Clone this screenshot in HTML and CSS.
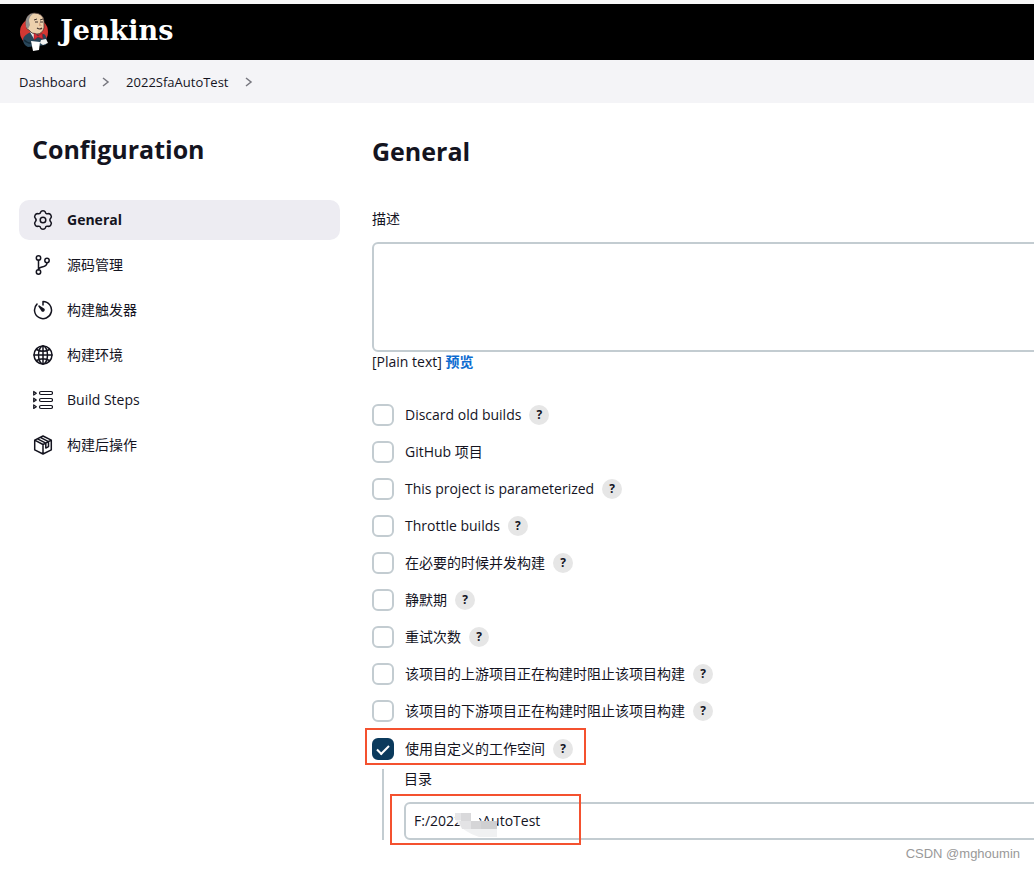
FILE: index.html
```html
<!DOCTYPE html>
<html lang="zh-CN">
<head>
<meta charset="utf-8">
<title>2022SfaAutoTest Config [Jenkins]</title>
<link rel="stylesheet" href="styles.css">
</head>
<body>
<header class="header">
  <a class="brand" href="#">
    <svg class="brand-logo" viewBox="0 0 28 40" aria-hidden="true">
      <circle cx="14" cy="20" r="14" fill="#d33833"/>
      <path d="M3 27Q4 23 11 20L19 23 24 22Q28 25 26 33L8 35Q3 33 3 27Z" fill="#29465a"/>
      <path d="M10 20l4 7 3-4Z" fill="#f1f1ef"/>
      <path d="M6 12Q5 2 14 1 23 1 24 9L24 16Q22 22 17 22 11 22 9 18L7 17Z" fill="#ecd0ac" stroke="#4b3b38" stroke-width=".8"/>
      <path d="M6 15Q4 3 14 1 9 4 9 9L10 13 8 17Z" fill="#92908d"/>
      <path d="M14 8l3-1M20 8l3-1" stroke="#40332f" stroke-width="1"/>
      <path d="M15 10h3M20 10h3M17 16q3 2 5 0" stroke="#40332f" stroke-width="1.200" fill="none"/>
      <path d="M19 10l3 4h-3" fill="#d7a987"/>
      <path d="M14 21l4 3 4-3 1 6-5-2-4 3Z" fill="#d52c36" stroke="#8d1920" stroke-width=".5"/>
      <path d="M4 28Q8 32 13 31" fill="none" stroke="#142b39" stroke-width="1.500"/>
      <path d="M11 29L20 30 19 38 13 39Z" fill="#fff"/>
      <path d="M21 28l5-1 2 4-5 2-3-2Z" fill="#f1f1ef"/>
    </svg>
    <span class="brand-name">Jenkins</span>
  </a>
</header>
<nav class="breadcrumbs" aria-label="Breadcrumb">
  <a href="#">Dashboard</a>
  <svg class="chevron" viewBox="0 0 8 12"><path d="M1 2l5 4-5 4"/></svg>
  <a href="#">2022SfaAutoTest</a>
  <svg class="chevron" viewBox="0 0 8 12"><path d="M1 2l5 4-5 4"/></svg>
</nav>
<div class="page">
  <aside class="sidebar">
    <h1 class="sidebar-title">Configuration</h1>
    <nav class="tasks">
      <a class="task task-active" href="#">
        <svg class="icon" viewBox="0 0 20 20"><path d="M7.7 2.1Q8.2.8 10 .8t2.3 1.3c.4 1.5 1.3 2 2.8 1.6 1.2-.3 2 .1 2.8 1.500.8 1.400.7 2.200-.2 3.100-1.100 1.100-1.100 2.300 0 3.400.9.9 1 1.700.2 3.100-.8 1.400-1.600 1.800-2.800 1.500-1.500-.4-2.400.1-2.800 1.600Q11.800 19.200 10 19.200t-2.300-1.300c-.4-1.500-1.300-2-2.800-1.600-1.200.3-2-.1-2.800-1.500-.8-1.400-.7-2.200.2-3.100 1.100-1.100 1.100-2.300 0-3.400-.9-.9-1-1.700-.2-3.100.8-1.400 1.600-1.800 2.800-1.500 1.500.4 2.400-.1 2.800-1.600Z"/><circle cx="10" cy="10" r="2.800"/></svg>
        <span>General</span>
      </a>
      <a class="task" href="#">
        <svg class="icon" viewBox="0 0 20 20"><circle cx="5.500" cy="3" r="2.200"/><circle cx="5.500" cy="17" r="2.200"/><circle cx="14" cy="5.500" r="2.200"/><path d="M5.500 5.200v9.600M14 7.700c0 4-4 4-6.500 4.800-1.300.4-2 1-2 2.300"/></svg>
        <span>源码管理</span>
      </a>
      <a class="task" href="#">
        <svg class="icon" viewBox="0 0 20 20"><path d="M10 5V1.600A8.500 8.500 0 1 1 4 4.100"/><path d="M6 6l5 3.400a1.300 1.300 0 0 1-1.600 1.600Z" fill="currentColor"/></svg>
        <span>构建触发器</span>
      </a>
      <a class="task" href="#">
        <svg class="icon" viewBox="0 0 20 20"><circle cx="10" cy="10" r="9"/><ellipse cx="10" cy="10" rx="4.500" ry="9"/><path d="M10 1v18M1 10h18M3.500 4.500Q10 8 16.500 4.500M3.500 15.500Q10 12 16.500 15.500"/></svg>
        <span>构建环境</span>
      </a>
      <a class="task" href="#">
        <svg class="icon icon-thin" viewBox="0 0 20 20"><rect x="6.500" y="1.500" width="13" height="3" rx="1.500"/><rect x="6.500" y="8.500" width="13" height="3" rx="1.500"/><rect x="6.500" y="15.500" width="13" height="3" rx="1.500"/><path d="M.7 1.500v3.600l2.600-1.800ZM.7 8.200v3.600L3.300 10ZM.7 14.900v3.600l2.600-1.800Z"/></svg>
        <span>Build Steps</span>
      </a>
      <a class="task" href="#">
        <svg class="icon" viewBox="0 0 20 20"><path d="M10 1l8.300 4.200v9.600L10 19l-8.300-4.200V5.200ZM1.700 5.200L10 9.500l8.300-4.300M10 9.500V19M4.500 3.800l8.300 4.300v5l2.700-1.500V6.600L7.300 2.400"/></svg>
        <span>构建后操作</span>
      </a>
    </nav>
  </aside>
  <main class="main">
    <h2 class="section-title">General</h2>
    <label class="field-label" for="description">描述</label>
    <textarea class="textarea" id="description"></textarea>
    <div class="preview">[Plain text] <a href="#">预览</a></div>
    <div class="options">
      <div class="option"><input type="checkbox" id="o1"><label for="o1">Discard old builds</label><button class="help" type="button">?</button></div>
      <div class="option"><input type="checkbox" id="o2"><label for="o2">GitHub 项目</label></div>
      <div class="option"><input type="checkbox" id="o3"><label for="o3">This project is parameterized</label><button class="help" type="button">?</button></div>
      <div class="option"><input type="checkbox" id="o4"><label for="o4">Throttle builds</label><button class="help" type="button">?</button></div>
      <div class="option"><input type="checkbox" id="o5"><label for="o5">在必要的时候并发构建</label><button class="help" type="button">?</button></div>
      <div class="option"><input type="checkbox" id="o6"><label for="o6">静默期</label><button class="help" type="button">?</button></div>
      <div class="option"><input type="checkbox" id="o7"><label for="o7">重试次数</label><button class="help" type="button">?</button></div>
      <div class="option"><input type="checkbox" id="o8"><label for="o8">该项目的上游项目正在构建时阻止该项目构建</label><button class="help" type="button">?</button></div>
      <div class="option"><input type="checkbox" id="o9"><label for="o9">该项目的下游项目正在构建时阻止该项目构建</label><button class="help" type="button">?</button></div>
    </div>
    <div class="option option-marked"><input type="checkbox" id="o10" checked><label for="o10">使用自定义的工作空间</label><button class="help" type="button">?</button><span class="marker marker-option"></span></div>
    <div class="nested">
      <label for="directory">目录</label>
      <div class="directory">
        <input class="textbox" type="text" id="directory" value="F:/2022SfaAutoTest">
        <svg class="smudge" viewBox="0 0 44 28" aria-hidden="true"><path d="M2 2h19v4l5 4h16v16H24Q6 20 0 8Z" fill="#f0f1f2"/><path d="M16 0h8v10h-8Z" fill="#fff"/><path d="M0 2h6v7H0Z" fill="#e5e5e7"/><path d="M6 2h10v8H6Z" fill="#d9d9db"/><path d="M4 10h12v8H7Z" fill="#e3e3e5"/><path d="M16 10h10v8H16Z" fill="#d5d5d7"/><path d="M26 10h16v8H26Z" fill="#cfcfd1"/></svg>
        <span class="marker marker-directory"></span>
      </div>
    </div>
  </main>
</div>
<div class="watermark">CSDN @mghoumin</div>
</body>
</html>
```
FILE: styles.css
```css
* { box-sizing: border-box; }
body {
  margin: 0;
  min-height: 100vh;
  position: relative;
  overflow-x: hidden;
  background: #fff;
  color: #14141f;
  font: 14px/20px "Open Sans", "Noto Sans CJK SC", sans-serif;
}
a { color: inherit; text-decoration: none; }
.header {
  display: flex;
  align-items: center;
  height: 60px;
  padding: 0 20px;
  background: #000;
  border-top: 4px solid #f8f8f8;
}
.brand { display: flex; align-items: center; gap: 12px; color: #fff; }
.brand-logo { width: 28px; height: 40px; }
.brand-name { font: bold 27px/36px "DejaVu Serif", serif; padding-bottom: 2px; }
.breadcrumbs {
  display: flex;
  align-items: center;
  height: 43px;
  padding: 0 19px;
  gap: 16px;
  background: #f4f4f7;
  font-size: 13px;
}
.chevron { width: 8px; height: 12px; fill: none; stroke: #77777f; stroke-width: 1.5; }
.page { display: grid; grid-template-columns: 321px minmax(0, 1fr); gap: 32px; padding-left: 19px; }
.sidebar-title, .section-title { margin: 0; font-size: 25px; line-height: 36px; font-weight: 700; }
.sidebar-title { padding: 28px 13px 0; }
.tasks { display: flex; flex-direction: column; gap: 5px; margin-top: 33px; }
.task {
  display: flex;
  align-items: center;
  gap: 14px;
  height: 40px;
  padding: 0 14px;
  border-radius: 10px;
}
.task-active { background: #edecf2; font-weight: 700; }
.icon { width: 20px; height: 20px; fill: none; stroke: #14141f; stroke-width: 1.5; stroke-linejoin: round; stroke-linecap: round; }
.icon-thin { stroke-width: 1.2; }
.main { padding-top: 30px; margin-right: -8px; }
.field-label { display: block; margin: 40px 0 13px; }
.textarea, .textbox {
  display: block;
  width: 100%;
  border: 2px solid #c3ccd1;
  border-radius: 6px;
  background: #fff;
  color: inherit;
  font: inherit;
}
.textarea { height: 110px; resize: none; }
.preview a { color: #0b6bd0; font-weight: 700; }
.options { display: flex; flex-direction: column; gap: 15px; margin-top: 32px; }
.option { display: flex; align-items: center; height: 22px; }
.option input {
  appearance: none;
  width: 22px;
  height: 22px;
  margin: 0 11px 0 0;
  border: 2px solid #c3ccd1;
  border-radius: 6px;
}
.option input:checked {
  border-color: #0b3a5c;
  background: #0b3a5c;
  display: grid;
  place-items: center;
}
.option input:checked::before {
  content: "";
  width: 10px;
  height: 5px;
  border: solid #fff;
  border-width: 0 0 2px 2px;
  transform: translateY(-1px) rotate(-45deg);
}
.help {
  width: 20px;
  height: 20px;
  margin-left: 8px;
  padding: 0;
  border: 0;
  border-radius: 50%;
  background: #e6e6e6;
  color: #14141f;
  font: 700 12px/20px "Open Sans", sans-serif;
}
.option-marked { position: relative; width: fit-content; margin-top: 16px; }
.marker { position: absolute; border: 2px solid #f4512f; pointer-events: none; }
.marker-option { inset: -10px -13px -5px -7px; }
.nested { margin: 9px 0 0 10px; padding-left: 20px; border-left: 2px solid #c3ccd1; }
.nested label { display: block; margin-bottom: 13px; }
.directory { position: relative; }
.textbox { height: 38px; padding: 0 8px 2px; }
.marker-directory { left: -14px; top: -8px; width: 191px; height: 51px; }
.smudge { position: absolute; left: 51px; top: 9px; width: 44px; height: 28px; }
.watermark {
  position: absolute;
  right: 14px;
  bottom: 7px;
  color: #999;
  font: 13px/20px "Liberation Sans", sans-serif;
}
```
